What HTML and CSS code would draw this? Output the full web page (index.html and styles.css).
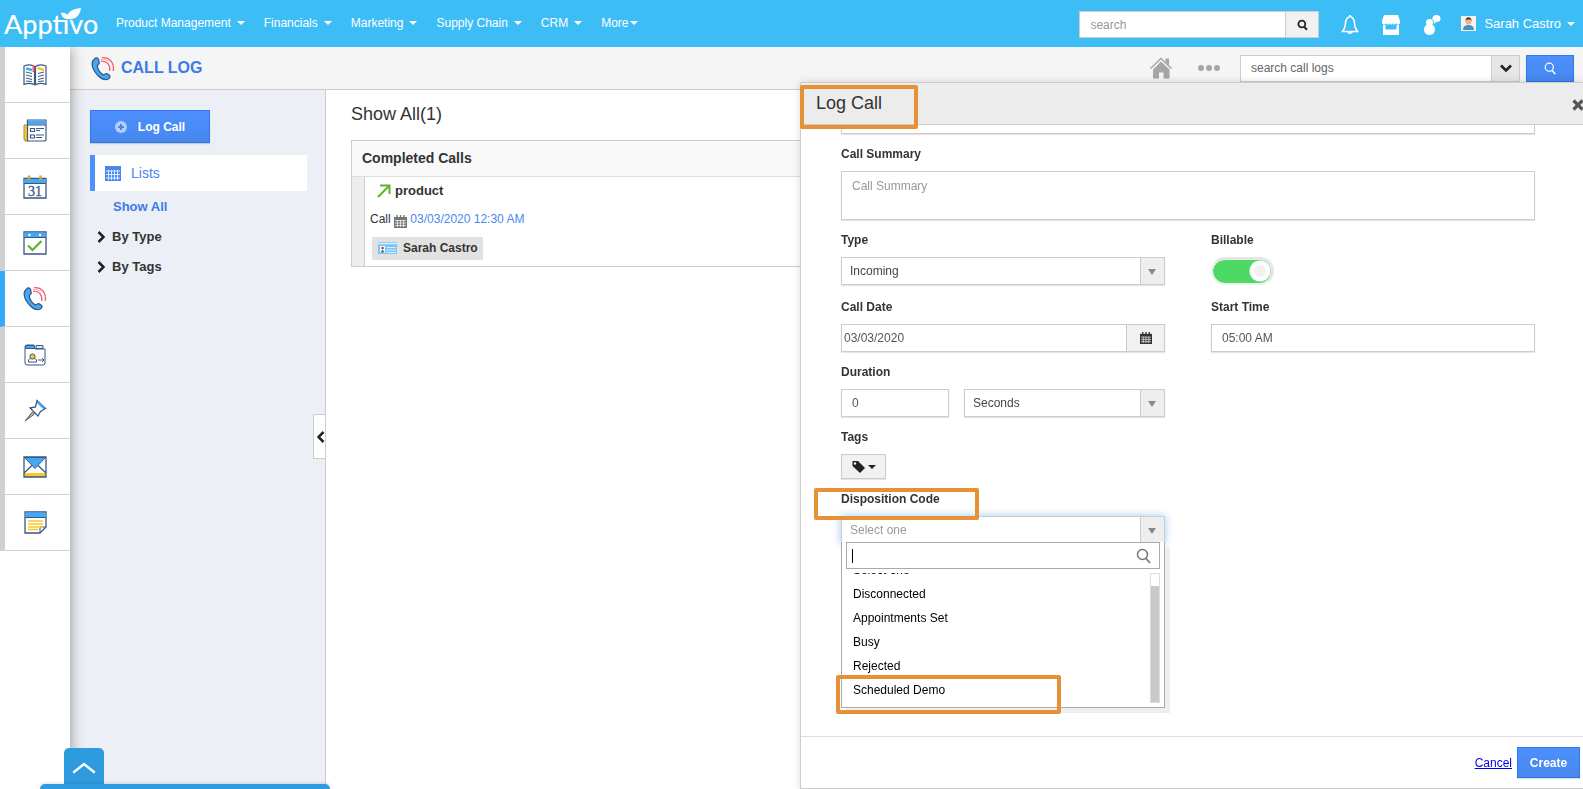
FILE: index.html
```html
<!DOCTYPE html>
<html lang="en">
<head>
    <meta charset="UTF-8">
    <meta name="viewport" content="width=device-width, initial-scale=1.0">
    <title>Call Log - Apptivo</title>
    <link rel="stylesheet" href="styles.css">
</head>
<body>
    <!-- Shared shapes -->
    <svg class="sprite" aria-hidden="true">
        <symbol id="phone" viewBox="0 0 24 24">
            <path d="M3.500 2.500C5 .8 7 1.200 7.600 3.200L8.200 6.500C8.300 7.800 6.500 8.200 6.300 9.400C6.200 12.500 9.500 17 12.300 18.300C13.600 18.600 14.300 16.800 15.800 17.200L18.300 18.800C19.500 19.800 19 21.500 17.300 22.500C14.500 24 11 22.800 7.500 19.500C3.500 15.500 1 11 1.200 7C1.300 5 2.200 3.500 3.500 2.500Z" fill="#42a9f5" stroke="#3a5785" stroke-width="1.300"/>
            <path d="M11 1.200C18 .2 23.500 6 22.300 14.500M10 4.600C16 4.200 19.600 8.500 18.700 14.500" fill="none" stroke="#ef5f78" stroke-width="1.300"/>
            <path d="M9.800 2.800C13 2.200 16 3.500 18 6" fill="none" stroke="#f8a4b2"/>
        </symbol>
        <symbol id="magnifier" viewBox="0 0 16 16">
            <circle cx="6.500" cy="6.500" r="5" fill="none" stroke="currentColor" stroke-width="1.500"/>
            <path d="M10 10.500L14 15" stroke="currentColor" stroke-width="1.800"/>
        </symbol>
        <symbol id="calendar" viewBox="0 0 13 13">
            <path d="M0 2H13V13H0Z" fill="currentColor"/>
            <path d="M3 0V3M6.500 0V3M10 0V3" stroke="currentColor" stroke-width="1.400"/>
            <path d="M1 5.500H12M1 8H12M1 10.500H12M3.500 5V12M6.500 5V12M9.500 5V12" stroke="#fff" stroke-width=".7"/>
        </symbol>
    </svg>

    <!-- Top bar -->
    <header class="topbar">
        <a class="logo" href="#">Apptivo
            <svg class="leaf" viewBox="0 0 20 12" width="20" height="12"><path d="M7 11C5 5 10 1 20 0C19 7 15 12 7 11ZM0 5C4 4 7 6 7 11C3 11 1 9 0 5Z" fill="#fff"/></svg>
        </a>
        <nav class="menu">
            <a class="caret" href="#">Product Management</a>
            <a class="caret" href="#">Financials</a>
            <a class="caret" href="#">Marketing</a>
            <a class="caret" href="#">Supply Chain</a>
            <a class="caret" href="#">CRM</a>
            <a class="caret more" href="#">More</a>
        </nav>
        <form class="search">
            <input type="text" placeholder="search" aria-label="Search">
            <button type="button" aria-label="Search"><svg width="11" height="12" viewBox="0 0 16 16"><circle cx="7" cy="6.500" r="5" fill="none" stroke="#222" stroke-width="2.600"/><path d="M10 10L14.500 15" stroke="#222" stroke-width="3"/></svg></button>
        </form>
        <div class="top-icons">
            <a href="#" aria-label="Notifications"><svg width="18" height="20" viewBox="0 0 18 20"><path d="M9 1.500C5.500 2.500 4.500 5 4.500 8.500C4.500 12 3.500 14 1.500 16.500H16.500C14.500 14 13.500 12 13.500 8.500C13.500 5 12.500 2.500 9 1.500Z" fill="none" stroke="#fff" stroke-width="1.500"/><path d="M8 0H10V2H8ZM6 17H12C11 19.500 7 19.500 6 17Z" fill="#fff"/></svg></a>
            <a href="#" aria-label="App Store"><svg width="20" height="20" viewBox="0 0 20 20"><path d="M3 0H17L19 6V8C18 10 16 10 15 8C14 10 12 10 11.500 8C11 10 9 10 8.500 8C8 10 6 10 5 8C4 10 2 10 1 8V6Z" fill="#fff"/><path d="M2 10H4.500V14.500H15.500V10H18V20H2Z" fill="#fff"/></svg></a>
            <a href="#" aria-label="Contacts"><svg width="18" height="20" viewBox="0 0 18 20"><circle cx="6.500" cy="7.500" r="3.500" fill="#fff"/><circle cx="6.500" cy="14.500" r="5.500" fill="#fff"/><ellipse cx="13.500" cy="3.500" rx="4" ry="3.500" fill="#fff"/><path d="M11 5L11 9L14 6Z" fill="#fff"/></svg></a>
        </div>
        <a class="user caret" href="#">
            <svg width="15" height="15" viewBox="0 0 15 15"><path d="M0 0H15V15H0Z" fill="#f4f1ee"/><path d="M2 14C2 10 5 9 7.500 9C10 9 13 10 13 14Z" fill="#4593c2"/><circle cx="7.500" cy="5.500" r="3" fill="#e9b48c"/><path d="M4.500 5C4 0 11 0 10.500 5L9.500 3.500H5.500Z" fill="#5b2d22"/></svg>
            Sarah Castro</a>
    </header>

    <div class="page">
        <!-- Icon rail -->
        <nav class="rail">
            <a href="#" aria-label="Contacts book"><svg width="24" height="22" viewBox="0 0 24 22" fill="none" stroke="#3a5785"><path d="M12 3C9 .5 5 .5 1 2V20.500C5 19 9 19 12 21C15 19 19 19 23 20.500V2C19 .5 15 .5 12 3ZM11.500 3V20M12.500 3V20" stroke-width="1.200"/><path d="M3 8L9 9.500M3 11L9 12.500M3 14L9 15.500M3 17L9 17.500M21 8L15 9.500M21 11L15 12.500M21 14L15 15.500M21 17L15 17.500"/><path d="M3 4.500L9 6" stroke="#42a9f5" stroke-width="2.500"/><path d="M10.500 1V8" stroke="#ef5f78" stroke-width="2"/><path d="M14.500 4L21 6" stroke="#fbc926" stroke-width="2.500"/></svg></a>
            <a href="#" aria-label="News"><svg width="24" height="23" viewBox="0 0 24 23" fill="none" stroke="#3a5785"><path d="M1 6H5V22H2L1 20Z" fill="#fbc926" stroke="#a18b4b"/><path d="M4.500 1H23V21L22 22H4.500Z" fill="#fff" stroke-width="1.200"/><path d="M5 1.500H22.500V5.500H5Z" fill="#42a9f5" stroke="none"/><path d="M4.500 6H23M7.500 9.500H11.500V12.500H7.500ZM7.500 16H11.500V19H7.500ZM13 9.500H21M13 11.500H17M13 16H21M13 18.500H19" stroke-width="1.200"/></svg></a>
            <a href="#" aria-label="Calendar"><svg width="24" height="24" viewBox="0 0 24 24"><path d="M1 3.500H23V23H1Z" fill="#fff" stroke="#3a5785" stroke-width="1.300"/><path d="M1.500 4H22.500V8H1.500Z" fill="#42a9f5"/><path d="M1 8.500H23" stroke="#3a5785"/><path d="M6 .5V5M17.500 .5V5" stroke="#d9a728" stroke-width="2.500"/><text x="12" y="21" text-anchor="middle" class="cal-day">31</text></svg></a>
            <a href="#" aria-label="Tasks"><svg width="24" height="24" viewBox="0 0 24 24"><path d="M1 1H23V23H1Z" fill="#fff" stroke="#3a5785" stroke-width="1.300"/><path d="M1.500 1.500H22.500V6H1.500Z" fill="#42a9f5"/><path d="M1 6.500H23" stroke="#3a5785"/><circle cx="6.500" cy="4" r="1.200" fill="#fff"/><circle cx="17" cy="4" r="1.200" fill="#fff"/><path d="M5 14.500L9.500 19L18.500 10" fill="none" stroke="#5eb32e" stroke-width="2.200"/></svg></a>
            <a class="active" href="#" aria-label="Call Log"><svg width="24" height="25"><use href="#phone"/></svg></a>
            <a href="#" aria-label="Follow ups"><svg width="22" height="22" viewBox="0 0 22 22" fill="none" stroke="#3a5785"><path d="M1 3V19Q1 21 3 21H19Q21 21 21 19V5H11L10 1H3Q1 1 1 3Z"/><path d="M1.500 1.500H10L11 4.500H1.500Z" fill="#42a9f5"/><path d="M12 1.500H19V4.500H12Z" fill="#dce9f7"/><path d="M4.500 18V16Q5 14 8.500 14.500Q12 14 12.500 16V18ZM14 16H20M18 14L20 16L18 18"/><circle cx="8.500" cy="12.500" r="2.600" fill="#fbc926"/></svg></a>
            <a href="#" aria-label="Pinned"><svg width="24" height="24" viewBox="0 0 24 24"><path d="M2 22L9.500 13L11.500 15Z" fill="#e3bf58" stroke="#3a5785"/><path d="M14 1.500L22.500 9.500L17.500 12.500L15 17L7 9L12.500 8Z" fill="#fff" stroke="#3a5785" stroke-width="1.300"/><path d="M14.500 3L21 9.300" stroke="#42a9f5" stroke-width="2.400"/></svg></a>
            <a href="#" aria-label="Email"><svg width="24" height="22" viewBox="0 0 24 22"><path d="M1 1H23V21H1Z" fill="#fff"/><path d="M1 17H23V21H1Z" fill="#fbc926"/><path d="M1 17L9 9.500M23 17L15 9.500M1 1H23V21H1Z" fill="none" stroke="#3a5785" stroke-width="1.300"/><path d="M1.500 1.500H22.500L12 12.500Z" fill="#42a9f5" stroke="#3a5785"/></svg></a>
            <a href="#" aria-label="Notes"><svg width="23" height="23" viewBox="0 0 23 23"><path d="M1 1H22V16L16 22H1Z" fill="#fff" stroke="#3a5785" stroke-width="1.300"/><path d="M1.500 1.500H21.500V6H1.500Z" fill="#42a9f5"/><path d="M1 6.500H22M22 16H16V22" fill="none" stroke="#3a5785"/><path d="M4 10H19M4 13H19M4 16H19M4 18.500H14" stroke="#fbc926" stroke-width="1.300"/></svg></a>
        </nav>

        <div class="content">
            <div class="app-header">
                <h1><svg width="24" height="25"><use href="#phone"/></svg>CALL LOG</h1>
                <a class="home" href="#" aria-label="Home"><svg width="22" height="22" viewBox="0 0 22 22"><path d="M.5 11.500L11 1.500L21.500 11.500" fill="none" stroke="#a6a6a6" stroke-width="1.500"/><path d="M15.500 1.500H19V8L15.500 5Z" fill="#a6a6a6"/><path d="M11 4.500L19.500 12.500V21.500H13.500V15.500H9V21.500H3V12.500Z" fill="#a6a6a6"/></svg></a>
                <button class="dots" type="button" aria-label="More actions"><svg width="22" height="6" viewBox="0 0 22 6" fill="#a6a6a6"><circle cx="3" cy="3" r="3"/><circle cx="11" cy="3" r="3"/><circle cx="19" cy="3" r="3"/></svg></button>
                <form class="search app-search">
                    <input type="text" placeholder="search call logs" aria-label="Search call logs">
                    <button type="button" aria-label="Search options"><svg width="12" height="9" viewBox="0 0 12 9"><path d="M1 1.500L6 6.500L11 1.500" fill="none" stroke="#222" stroke-width="2.600"/></svg></button>
                </form>
                <button class="btn-primary btn-search" type="button" aria-label="Search call logs"><svg width="13" height="13"><use href="#magnifier"/></svg></button>
            </div>

            <div class="columns">
                <aside class="panel">
                    <button class="btn-primary btn-log" type="button"><svg width="12" height="12" viewBox="0 0 12 12"><circle cx="6" cy="6" r="6" fill="#b5cffc"/><path d="M6 3V9M3 6H9" stroke="#4a87f0" stroke-width="2"/></svg>Log Call</button>
                    <a class="lists" href="#"><svg width="16" height="15" viewBox="0 0 16 15"><path d="M0 0H16V15H0Z" fill="#4a87f0"/><path d="M1 5H15M1 8.500H15M1 12H15M3.500 4V14M6.500 4V14M9.500 4V14M12.500 4V14" stroke="#dfe9fd"/></svg>Lists</a>
                    <a class="show-all" href="#">Show All</a>
                    <a class="group" href="#"><svg width="8" height="12" viewBox="0 0 8 12"><path d="M1.500 1L6.500 6L1.500 11" fill="none" stroke="#222" stroke-width="2.500"/></svg>By Type</a>
                    <a class="group" href="#"><svg width="8" height="12" viewBox="0 0 8 12"><path d="M1.500 1L6.500 6L1.500 11" fill="none" stroke="#222" stroke-width="2.500"/></svg>By Tags</a>
                    <button class="collapse" type="button" aria-label="Collapse"><svg width="8" height="12" viewBox="0 0 8 12"><path d="M6.500 1L1.500 6L6.500 11" fill="none" stroke="#222" stroke-width="2.500"/></svg></button>
                </aside>

                <main class="main">
                    <h2>Show All(1)</h2>
                    <section class="calls">
                        <h3>Completed Calls</h3>
                        <div class="call">
                            <div class="call-name"><svg width="14" height="14" viewBox="0 0 14 14"><path d="M1 13L12 2M3 1.500H12.500V10" fill="none" stroke="#5eb32e" stroke-width="2"/></svg>product</div>
                            <div class="call-date">Call <svg width="13" height="13"><use href="#calendar"/></svg> <a href="#">03/03/2020 12:30 AM</a></div>
                            <a class="chip" href="#"><svg width="19" height="14" viewBox="0 0 19 14"><path d="M0 1H19V13H0Z" fill="#7cc4f8"/><path d="M0 2.500H19" stroke="#d9effd" stroke-width="1.500"/><path d="M2 5H7V12H2Z" fill="#fff"/><path d="M8.500 6.500H18M8.500 9H18M8.500 11.500H18" stroke="#d9effd"/><circle cx="4.500" cy="7" r="1.300" fill="#a5443a"/><path d="M2.500 11.500L4.500 8.500L6.500 11.500Z" fill="#3a5785"/></svg>Sarah Castro</a>
                        </div>
                    </section>
                </main>
            </div>
        </div>
    </div>

    <!-- Log call drawer -->
    <section class="drawer">
        <header class="drawer-header">
            <h2>Log Call</h2>
            <button class="close" type="button" aria-label="Close"><svg width="11" height="12" viewBox="0 0 11 12"><path d="M1.500 1.500L10.500 10.500M10.500 1.500L1.500 10.500" stroke="#555" stroke-width="3.200"/></svg></button>
            <span class="mark mark-title"></span>
        </header>

        <form class="drawer-body">
            <input class="field subject" type="text" aria-label="Subject">

            <div class="form-group wide">
                <label for="summary">Call Summary</label>
                <textarea class="field" id="summary" placeholder="Call Summary"></textarea>
            </div>

            <div class="form-group">
                <label for="type">Type</label>
                <div class="select">
                    <select id="type"><option>Incoming</option><option>Outgoing</option></select>
                </div>
            </div>
            <div class="form-group">
                <label for="billable">Billable</label>
                <input class="toggle" type="checkbox" id="billable" checked>
            </div>

            <div class="form-group">
                <label for="date">Call Date</label>
                <div class="date">
                    <input class="field" type="text" id="date" value="03/03/2020">
                    <button type="button" aria-label="Pick a date"><svg width="12" height="12"><use href="#calendar"/></svg></button>
                </div>
            </div>
            <div class="form-group">
                <label for="time">Start Time</label>
                <input class="field" type="text" id="time" value="05:00 AM">
            </div>

            <div class="form-group">
                <label for="duration">Duration</label>
                <div class="duration">
                    <input class="field" type="text" id="duration" value="0">
                    <div class="select">
                        <select aria-label="Duration unit"><option>Seconds</option><option>Minutes</option></select>
                    </div>
                </div>
            </div>

            <div class="form-group first">
                <label for="tags">Tags</label>
                <button class="btn-tags" type="button" id="tags" aria-label="Tags"><svg width="13" height="12" viewBox="0 0 13 12"><path d="M.5 0H6L13 7L8 12L.5 5Z" fill="#222"/><circle cx="3" cy="2.500" r="1.200" fill="#f1f1f1"/></svg></button>
            </div>

            <div class="form-group first disposition">
                <label for="disposition">Disposition Code</label>
                <div class="select open">
                    <select id="disposition"><option>Select one</option></select>
                </div>
                <div class="options">
                    <div class="options-search">
                        <input type="text" aria-label="Filter disposition codes">
                        <span class="cursor"></span>
                        <svg width="16" height="16"><use href="#magnifier"/></svg>
                    </div>
                    <div class="options-scroll">
                        <ul role="listbox" aria-label="Disposition codes">
                            <li role="option">Select one</li>
                            <li role="option">Disconnected</li>
                            <li role="option">Appointments Set</li>
                            <li role="option">Busy</li>
                            <li role="option">Rejected</li>
                            <li role="option">Scheduled Demo</li>
                        </ul>
                        <div class="scrollbar"></div>
                    </div>
                    <span class="mark mark-option"></span>
                </div>
                <span class="mark mark-label"></span>
            </div>
        </form>

        <footer class="drawer-footer">
            <a href="#">Cancel</a>
            <button class="btn-primary btn-create" type="button">Create</button>
        </footer>
    </section>

    <!-- Bottom dock -->
    <div class="dock">
        <button type="button" aria-label="Open dock"><svg width="24" height="12" viewBox="0 0 24 12"><path d="M2 10L12 2L22 10" fill="none" stroke="#fff" stroke-width="2.500" stroke-linecap="round"/></svg></button>
        <div class="dock-bar"></div>
    </div>
</body>
</html>
```
FILE: styles.css
```css
* {
    box-sizing: border-box;
}

body {
    margin: 0;
    height: 100vh;
    display: flex;
    flex-direction: column;
    overflow: hidden;
    font-family: "Liberation Sans", Arial, sans-serif;
    font-size: 12px;
    line-height: 20px;
    color: #333;
    background-color: #fff;
}

h1, h2, h3, ul {
    margin: 0;
    padding: 0;
    font-weight: normal;
}

a {
    color: inherit;
    text-decoration: none;
}

svg {
    flex: none;
}

input, select, textarea, button {
    font: inherit;
    color: inherit;
    margin: 0;
    border-radius: 0;
    outline: none;
}

button {
    display: flex;
    align-items: center;
    justify-content: center;
    padding: 0;
    cursor: pointer;
}

.sprite {
    position: absolute;
    width: 0;
    height: 0;
}

/* Top bar */
.topbar {
    flex: none;
    height: 47px;
    display: flex;
    align-items: center;
    padding: 0 8px 0 4px;
    background-color: #3dbdf6;
    color: #fff;
}

.logo {
    position: relative;
    width: 112px;
    font-family: Lato, sans-serif;
    font-size: 27px;
    font-weight: 500;
    line-height: 32px;
}

.leaf {
    position: absolute;
    left: 57px;
    top: 0;
}

.menu {
    display: flex;
    gap: 19px;
    flex: 1;
    padding-bottom: 1px;
}

.caret::after {
    content: "";
    display: inline-block;
    margin-left: 6px;
    vertical-align: 2px;
    border: 4px solid transparent;
    border-top-color: currentColor;
    border-bottom: 0;
}

.more::after {
    margin-left: 1px;
}

.search {
    display: flex;
    width: 240px;
    height: 27px;
    border: 1px solid #ccc;
}

.topbar .search {
    margin-top: 2px;
}

.search input {
    flex: 1;
    min-width: 0;
    padding: 0 10px;
    border: 0;
    background-color: #fff;
    color: #555;
}

.search input::placeholder {
    color: #999;
}

.search button {
    width: 33px;
    border: 0;
    border-left: 1px solid #ccc;
    background-color: #f1f1f1;
}

.top-icons {
    display: flex;
    gap: 22px;
    margin: 2px 20px 0 22px;
}

.top-icons a, .top-icons svg {
    display: block;
}

.user {
    display: flex;
    align-items: center;
    font-size: 13px;
}

.user svg {
    margin-right: 8px;
}

/* Page */
.page {
    flex: 1;
    display: flex;
    min-height: 0;
}

.rail {
    position: relative;
    z-index: 1;
    width: 70px;
    background-color: #fff;
    box-shadow: 0 0 14px rgba(0, 0, 0, 0.4);
    clip-path: inset(0 -20px 0 0);
}

.rail a {
    display: flex;
    align-items: center;
    justify-content: center;
    height: 56px;
    border-left: 5px solid #d0d0d0;
    border-bottom: 1px solid #d0d0d0;
    padding-right: 5px;
}

.rail .active {
    border-left-color: #33a9fd;
}

.cal-day {
    font: 14px "Liberation Serif", serif;
    fill: #3a5785;
    stroke: #3a5785;
    stroke-width: .3px;
}

.content {
    flex: 1;
    display: flex;
    flex-direction: column;
    min-width: 0;
}

.app-header {
    height: 43px;
    display: flex;
    align-items: center;
    padding: 0 9px 0 21px;
    background-color: #f5f5f5;
    border-bottom: 1px solid #ccc;
}

.app-header h1 {
    flex: 1;
    display: flex;
    align-items: center;
    gap: 6px;
    font-size: 16px;
    font-weight: bold;
    color: #3b7be8;
}

.app-header svg {
    display: block;
}

.dots {
    margin: 0 20px 0 26px;
    border: 0;
    background: none;
}

.app-search {
    width: 280px;
}

.app-search input::placeholder {
    color: #666;
}

.app-search button {
    width: 28px;
    background-color: #e6e6e6;
}

.btn-primary {
    border: 1px solid #3079ed;
    background: linear-gradient(#4d90fe, #4787ed);
    color: #fff;
    font-weight: bold;
    box-shadow: 0 1px 1px rgba(0, 0, 0, 0.15);
}

.btn-search {
    width: 48px;
    height: 27px;
    margin-left: 6px;
}

.columns {
    flex: 1;
    display: flex;
}

.panel {
    position: relative;
    width: 256px;
    padding: 20px 18px 0 20px;
    background-color: #eceff5;
    border-right: 1px solid #ccc;
}

.btn-log {
    width: 120px;
    height: 33px;
    gap: 11px;
    margin-bottom: 12px;
}

.lists {
    display: flex;
    align-items: center;
    gap: 10px;
    height: 36px;
    margin-bottom: 1px;
    padding-left: 10px;
    border-left: 5px solid #4d90fe;
    background-color: #fff;
    font-size: 14px;
    color: #4a87f0;
}

.show-all, .group {
    display: flex;
    align-items: center;
    height: 30px;
    font-size: 13px;
    font-weight: bold;
}

.show-all {
    padding-left: 23px;
    color: #3b7be8;
}

.group {
    gap: 7px;
    padding-left: 7px;
}

.collapse {
    position: absolute;
    right: 0;
    top: 324px;
    width: 12px;
    height: 45px;
    padding-left: 2px;
    border: 1px solid #ccc;
    border-right: 0;
    background-color: #fff;
}

.main {
    flex: 1;
    padding: 14px 0 0 25px;
}

.main h2 {
    font-size: 18px;
    margin-bottom: 16px;
}

.calls {
    border: 1px solid #ccc;
}

.calls h3 {
    height: 36px;
    padding-left: 10px;
    line-height: 35px;
    font-size: 14px;
    font-weight: bold;
    background-color: #f9f9f9;
    border-bottom: 1px solid #ddd;
}

.call {
    padding: 4px 0 6px 6px;
    border-left: 12px solid #ededed;
    box-shadow: inset 1px 0 #ccc;
}

.call-name {
    display: flex;
    align-items: center;
    gap: 4px;
    padding-left: 7px;
    font-size: 13px;
    font-weight: bold;
}

.call-date {
    margin: 8px 0;
}

.call-date svg {
    color: #777;
    vertical-align: -5px;
}

.call-date a {
    color: #4a87f0;
}

.chip {
    display: inline-flex;
    align-items: center;
    gap: 6px;
    height: 23px;
    margin-left: 2px;
    padding: 0 5px 1px 6px;
    background-color: #e2e2e2;
    font-weight: bold;
    vertical-align: top;
}

/* Drawer */
.drawer {
    position: fixed;
    top: 82px;
    right: 0;
    bottom: 0;
    z-index: 5;
    width: 783px;
    max-width: 100%;
    display: flex;
    flex-direction: column;
    background-color: #fff;
    border: 1px solid #ccc;
    border-right: 0;
    box-shadow: 0 0 8px rgba(0, 0, 0, 0.15);
}

.drawer-header {
    position: relative;
    z-index: 1;
    height: 42px;
    display: flex;
    justify-content: space-between;
    padding-left: 15px;
    background-color: #ececec;
    border-bottom: 1px solid #ccc;
}

.drawer-header h2 {
    font-size: 18px;
    line-height: 40px;
}

.close {
    align-self: center;
    padding-top: 2px;
    border: 0;
    background: none;
}

.drawer-body {
    flex: 1;
    display: grid;
    grid-template-columns: 1fr 1fr;
    column-gap: 46px;
    row-gap: 10px;
    align-content: start;
    padding: 0 48px 0 40px;
    overflow: hidden;
}

.form-group {
    position: relative;
}

.wide {
    grid-column: 1 / 3;
}

.first {
    grid-column: 1;
}

.form-group label {
    display: block;
    margin-bottom: 7px;
    font-weight: bold;
}

.field {
    display: block;
    width: 100%;
    height: 28px;
    padding: 0 10px;
    border: 1px solid #ccc;
    background-color: #fff;
    color: #555;
    box-shadow: 0 1px 1px rgba(0, 0, 0, 0.1);
}

textarea.field {
    height: 49px;
    padding: 4px 10px;
    resize: none;
}

.field::placeholder {
    color: #999;
}

.subject {
    grid-column: 1 / 3;
    margin-top: -19px;
}

.select {
    position: relative;
    flex: 1;
    height: 28px;
    border: 1px solid #ccc;
    background-color: #fff;
    box-shadow: 0 1px 1px rgba(0, 0, 0, 0.1);
}

.select select {
    display: block;
    width: 100%;
    height: 26px;
    padding: 0 8px;
    border: 0;
    background: linear-gradient(to left, #eee 23px, #ccc 23px, #ccc 24px, transparent 24px);
    color: #444;
    appearance: none;
}

.select::after {
    content: "";
    position: absolute;
    right: 8px;
    top: 11px;
    border: 4px solid transparent;
    border-top: 6px solid #888;
    border-bottom: 0;
    pointer-events: none;
}

.open {
    box-shadow: 0 0 8px rgba(82, 168, 236, 0.6);
}

.open select {
    color: #999;
}

.toggle {
    display: block;
    width: 63px;
    height: 28px;
    margin-bottom: 2px;
    border: 2px solid #f0f0f0;
    border-top: 3px solid #e6e6e6;
    border-right: 3px solid #e6e6e6;
    border-radius: 15px;
    background: radial-gradient(circle at 47px 11px, #f1f1f1 5px, #fff 7px, #fff 10px, transparent 11px), #4cd964;
    background-origin: padding-box;
    background-clip: padding-box;
    appearance: none;
}

.date, .duration {
    display: flex;
}

.date .field {
    padding: 0 2px;
}

.date button, .btn-tags {
    flex: none;
    width: 38px;
    height: 28px;
    border: 1px solid #ccc;
    background-color: #f1f1f1;
    box-shadow: 0 1px 1px rgba(0, 0, 0, 0.1);
}

.date button {
    border-left: 0;
}

.duration {
    gap: 15px;
}

.duration .field {
    width: 108px;
}

.btn-tags {
    width: 45px;
    height: 25px;
    gap: 3px;
}

.btn-tags::after {
    content: "";
    border: 4px solid transparent;
    border-top-color: #222;
    border-bottom: 0;
}

.options {
    position: absolute;
    top: 53px;
    left: 0;
    right: 0;
    padding: 0 4px 4px;
    border: 1px solid #aaa;
    border-top: 0;
    background-color: #fff;
    color: #000;
    box-shadow: 5px 5px #eee;
}

.options-search {
    position: relative;
    display: flex;
    align-items: center;
    height: 27px;
    padding-right: 7px;
    border: 1px solid #aaa;
    color: #777;
}

.options-search input {
    flex: 1;
    border: 0;
    padding: 0 6px;
    background: none;
}

.cursor {
    position: absolute;
    left: 5px;
    top: 6px;
    width: 1px;
    height: 14px;
    background-color: #000;
}

.options-scroll {
    display: flex;
    height: 130px;
    margin-top: 4px;
}

.options ul {
    flex: 1;
    display: flex;
    flex-direction: column;
    justify-content: flex-end;
    padding-bottom: 1px;
    overflow: hidden;
    list-style: none;
}

.options li {
    flex: none;
    padding-left: 7px;
    line-height: 24px;
}

.scrollbar {
    width: 10px;
    border: 1px solid #ddd;
    background: linear-gradient(#fff 12px, #c9c9c9 12px);
}

/* Highlight frames */
.mark {
    position: absolute;
    border: 4px solid #e79137;
    border-radius: 2px;
    pointer-events: none;
}

.mark-title {
    left: -1px;
    top: 2px;
    width: 118px;
    height: 44px;
}

.mark-label {
    left: -27px;
    top: -1px;
    width: 165px;
    height: 32px;
}

.mark-option {
    left: -6px;
    bottom: -7px;
    width: 225px;
    height: 39px;
}

.drawer-footer {
    height: 52px;
    display: flex;
    align-items: center;
    justify-content: flex-end;
    gap: 5px;
    padding-right: 3px;
    border-top: 1px solid #ddd;
}

.drawer-footer a {
    color: #00e;
    text-decoration: underline;
}

.btn-create {
    width: 63px;
    height: 31px;
}

/* Dock */
.dock {
    position: fixed;
    left: 40px;
    bottom: 0;
    z-index: 6;
    width: 290px;
}

.dock button {
    width: 40px;
    height: 36px;
    margin-left: 24px;
    padding-top: 4px;
    border: 0;
    border-radius: 5px 5px 0 0;
    background-color: #2f9bdf;
}

.dock-bar {
    height: 5px;
    border-radius: 5px 5px 0 0;
    background-color: #2f9bdf;
    box-shadow: 0 0 4px rgba(0, 0, 0, 0.2);
}
```
